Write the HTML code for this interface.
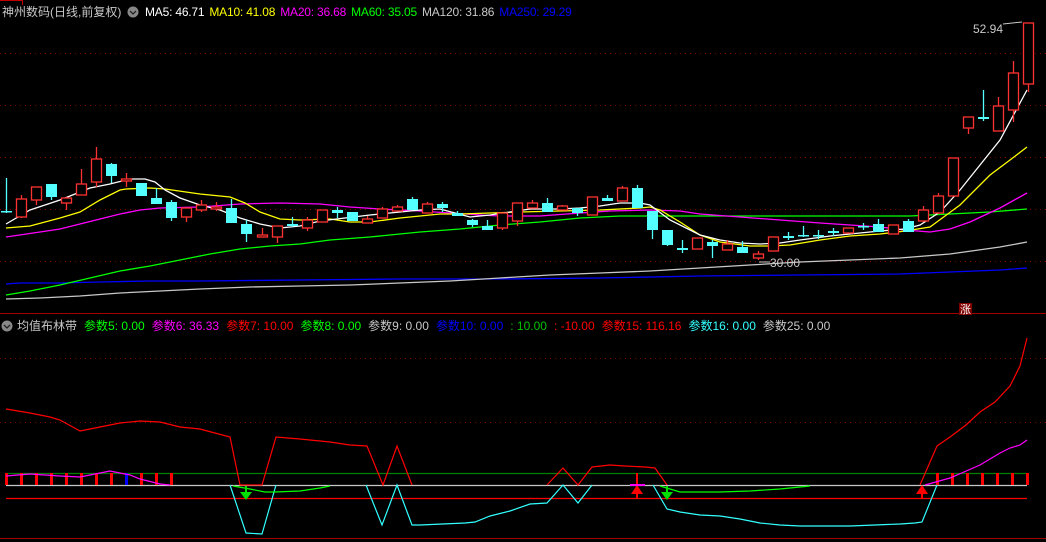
<!DOCTYPE html>
<html><head><meta charset="utf-8"><style>
body{margin:0;background:#000;width:1046px;height:542px;overflow:hidden;position:relative;font-family:"Liberation Sans","Noto Sans CJK SC",sans-serif;font-size:12px}
.h{position:absolute;white-space:nowrap;line-height:14px}
.t span{margin-right:5px;letter-spacing:-0.2px}
.l span{margin-right:7px}
</style></head><body>
<svg width="1046" height="542" style="position:absolute;left:0;top:0" id="s">
<g stroke="#800000" stroke-dasharray="1,4" stroke-width="1">
<line x1="0" y1="53.5" x2="1046" y2="53.5"/><line x1="0" y1="105.5" x2="1046" y2="105.5"/><line x1="0" y1="157.5" x2="1046" y2="157.5"/><line x1="0" y1="209.5" x2="1046" y2="209.5"/><line x1="0" y1="261.5" x2="1046" y2="261.5"/>
<line x1="0" y1="358.5" x2="1046" y2="358.5"/><line x1="0" y1="422.5" x2="1046" y2="422.5"/>
</g>
<line x1="0" y1="313.5" x2="1046" y2="313.5" stroke="#a00000"/>
<line x1="0" y1="538.5" x2="1046" y2="538.5" stroke="#a00000"/>
<line x1="0" y1="0.5" x2="22" y2="0.5" stroke="#c00000"/><line x1="22.5" y1="0" x2="22.5" y2="5" stroke="#c00000"/>
<g fill="none" stroke-width="1.3">
<polyline stroke="#0000ff" points="6,284 20,283 60,283 100,282 150,281 200,281 300,280 400,279 500,279 600,278 700,276 800,275 900,274 950,272 1000,270 1027,268"/>
<polyline stroke="#c8c8c8" points="6,299 40,298 80,296 120,293 160,291 200,289 250,287 300,286 350,285 400,283 450,281 500,278 550,275 600,273 650,271 700,268 750,265 800,262 850,260 900,258 950,254 1000,247 1027,242"/>
<polyline stroke="#00ff00" points="6,295 30,291 60,285 90,278 120,271 150,266 180,260 210,254 240,249 270,246 300,244 330,240 370,237 420,232 460,229 500,225 540,222 580,218 620,216 650,216 700,216 750,216 850,216 910,216 950,214 990,212 1027,209"/>
<polyline stroke="#ff00ff" points="6,237 40,232 60,229 80,224 100,219 120,214 140,210 160,208 200,207 240,204 280,203 320,204 350,207 380,209 420,211 450,213 480,215 500,216 540,216 580,213 610,211 650,210 680,211 700,214 740,217 780,220 820,223 850,225 880,227 905,230 930,232 950,229 970,222 1000,208 1027,193"/>
<polyline stroke="#ffff00" points="6,228 30,226 60,218 80,212 100,200 120,190 126,189 150,188 165,189 200,194 230,197 245,203 260,212 280,219 300,220 330,219 350,222 370,222 400,218 420,216 440,214 460,214 490,213 520,212 560,211 600,210 640,208 650,207 660,210 680,222 700,235 720,242 750,246 770,246 790,245 820,240 850,236 880,234 905,231 930,227 960,205 990,175 1010,160 1027,147"/>
<polyline stroke="#ffffff" points="6,224 30,210 60,200 90,188 110,184 130,179 145,179 155,182 165,190 180,198 200,205 220,210 240,218 260,224 280,228 300,226 320,221 345,218 370,215 400,212 420,210 440,209 455,213 470,217 490,215 510,212 530,209 560,209 580,208 600,206 620,203 640,203 650,205 670,220 700,235 720,240 740,243 760,244 780,243 800,240 830,236 860,233 880,231 905,229 920,225 940,212 960,190 980,165 1000,140 1027,90"/>
</g>
<g id="c"></g>
<text x="973" y="33" fill="#c8c8c8" font-size="12" font-family="Liberation Sans">52.94</text>
<line x1="1003" y1="24" x2="1022" y2="22" stroke="#c8c8c8"/>
<text x="770" y="267" fill="#c8c8c8" font-size="12" font-family="Liberation Sans">30.00</text>
<line x1="759" y1="262" x2="770" y2="262" stroke="#c8c8c8"/>
<rect x="959" y="303" width="13" height="12" fill="#800000"/>
<text x="960" y="313" fill="#fff" font-size="11" font-family="Noto Sans CJK SC">涨</text>
<line x1="6" y1="473.5" x2="1027" y2="473.5" stroke="#008000" stroke-width="1.3"/>
<line x1="6" y1="485.5" x2="1027" y2="485.5" stroke="#c8c8c8" stroke-width="1.3"/>
<line x1="6" y1="498.5" x2="1027" y2="498.5" stroke="#ff0000" stroke-width="1.3"/>
<g id="bars"></g>
<g fill="none" stroke-width="1.2">
<polyline stroke="#ff0000" points="6,409 30,413 50,417 60,420 80,431 90,429 100,427 120,423 140,421 160,422 180,427 200,429 230,437 240,485 262,485 276,437 300,439 330,442 350,445 367,446 383,485 397,446 412,485"/>
<polyline stroke="#ff0000" points="547,485 563,468 578,485 592,467 610,465 625,466 645,467 655,468 667,485"/>
<polyline stroke="#ff0000" points="920,485 937,446 950,437 966,425 980,412 995,402 1010,386 1020,366 1027,338"/>
<polyline stroke="#33ffff" points="230,485 246,533 262,534 276,485"/>
<polyline stroke="#33ffff" points="366,485 382,525 397,485 412,525 420,525 465,523 475,522 490,516 510,511 530,504 547,503 563,485 578,503 592,485"/>
<polyline stroke="#33ffff" points="653,485 667,509 680,512 700,515 720,516 740,519 760,523 780,525 800,526 850,526 900,524 915,523 922,522 937,485"/>
<polyline stroke="#00ff00" points="233,486 250,489 265,492 275,492 300,491 320,488 330,486"/>
<polyline stroke="#00ff00" points="660,486 680,492 720,492 750,491 780,489 810,486"/>
<polyline stroke="#ff00ff" points="6,476 30,474 60,476 80,477 95,474 110,471 115,472 130,475 140,479 160,484 170,485"/>
<polyline stroke="#ff00ff" points="925,485 950,478 980,465 1000,453 1010,448 1020,445 1027,440"/>
</g>
<g stroke-width="2">
<line x1="246" y1="486" x2="246" y2="494" stroke="#00e000"/><polygon points="240,492 252,492 246,500" fill="#00e000"/>
<line x1="667" y1="486" x2="667" y2="494" stroke="#00e000"/><polygon points="661,492 673,492 667,500" fill="#00e000"/>
<line x1="637" y1="473" x2="637" y2="498" stroke="#ff0000"/><polygon points="631,494 643,494 637,485" fill="#ff0000"/>
<line x1="922" y1="488" x2="922" y2="498" stroke="#ff0000"/><polygon points="916,494 928,494 922,485" fill="#ff0000"/>
<line x1="630" y1="485" x2="645" y2="485" stroke="#ff00ff"/>
</g>
<circle cx="133" cy="12" r="5.5" fill="#888"/><polyline points="130,11 133,14 136,11" fill="none" stroke="#222" stroke-width="1.3"/>
<circle cx="7" cy="326" r="5.5" fill="#888"/><polyline points="4,325 7,328 10,325" fill="none" stroke="#222" stroke-width="1.3"/>
</svg>
<div class="h" style="left:2px;top:5px;color:#c8c8c8">神州数码(日线,前复权)</div>
<div class="h t" style="left:145px;top:5px"><span style="color:#fff">MA5: 46.71</span><span style="color:#ffff00">MA10: 41.08</span><span style="color:#ff00ff">MA20: 36.68</span><span style="color:#00ff00">MA60: 35.05</span><span style="color:#c8c8c8">MA120: 31.86</span><span style="color:#0000ff">MA250: 29.29</span></div>
<div class="h l" style="left:17px;top:319px"><span style="color:#c8c8c8">均值布林带</span><span style="color:#00ff00">参数5: 0.00</span><span style="color:#ff00ff">参数6: 36.33</span><span style="color:#ff0000">参数7: 10.00</span><span style="color:#00ff00">参数8: 0.00</span><span style="color:#c8c8c8">参数9: 0.00</span><span style="color:#0000ff">参数10: 0.00</span><span style="color:#00c000">: 10.00</span><span style="color:#ff0000">: -10.00</span><span style="color:#ff0000">参数15: 116.16</span><span style="color:#33ffff">参数16: 0.00</span><span style="color:#c8c8c8">参数25: 0.00</span></div>
<script>
var C=[[0,211,212,178,213,'c'],[1,199,217,195,218,'r'],[2,187,200,187,205,'r'],[3,184,197,184,200,'c'],[4,198,203,197,210,'r'],[5,184,195,169,195,'r'],[6,159,182,147,187,'r'],[7,164,176,163,183,'c'],[8,179,181,173,187,'r'],[9,183,196,183,196,'c'],[10,198,204,188,204,'c'],[11,202,218,200,221,'c'],[12,208,217,208,222,'r'],[13,205,210,200,212,'r'],[14,207,209,202,211,'r'],[15,208,223,199,223,'c'],[16,224,234,220,242,'c'],[17,235,237,228,237,'r'],[18,226,237,226,243,'r'],[19,224,226,217,227,'c'],[20,220,228,217,231,'r'],[21,210,222,210,222,'r'],[22,210,213,207,218,'c'],[23,212,221,212,221,'c'],[24,219,223,216,223,'r'],[25,209,218,207,218,'r'],[26,207,211,205,211,'r'],[27,199,210,197,210,'c'],[28,204,213,202,213,'r'],[29,204,208,202,212,'c'],[30,213,216,211,216,'c'],[31,220,225,219,227,'c'],[32,226,230,220,230,'c'],[33,213,228,213,230,'r'],[34,203,221,203,226,'r'],[35,203,208,200,208,'r'],[36,203,212,198,212,'c'],[37,206,210,205,210,'r'],[38,208,213,208,216,'c'],[39,197,215,197,215,'r'],[40,198,201,195,201,'c'],[41,188,201,186,201,'r'],[42,188,208,185,208,'c'],[43,211,230,211,239,'c'],[44,230,245,230,246,'c'],[45,248,250,240,253,'c'],[46,238,249,238,249,'r'],[47,242,246,240,258,'c'],[48,244,250,240,250,'r'],[49,247,253,241,253,'c'],[50,254,258,251,260,'r'],[51,237,251,237,251,'r'],[52,236,238,232,240,'c'],[53,235,235,226,237,'c'],[54,235,235,230,239,'c'],[55,231,233,228,236,'c'],[56,228,233,228,233,'r'],[57,226,226,223,230,'c'],[58,224,232,219,232,'c'],[59,225,234,225,234,'r'],[60,221,232,219,232,'c'],[61,210,221,206,222,'r'],[62,196,213,193,214,'r'],[63,158,196,158,196,'r'],[64,117,128,117,134,'r'],[65,117,119,90,121,'c'],[66,106,131,97,131,'r'],[67,73,110,61,122,'r'],[68,23,84,23,92,'r']];
var s='';C.forEach(function(k){var x=Math.round(6+k[0]*15.03),t=Math.min(k[1],k[2]),h=Math.max(1.5,Math.abs(k[2]-k[1]));var col=k[5]=='r'?'#ff3232':'#54ffff';
s+='<line x1="'+(x+.5)+'" y1="'+k[3]+'" x2="'+(x+.5)+'" y2="'+k[4]+'" stroke="'+col+'" stroke-width="1.3"/>';
if(k[5]=='r')s+='<rect x="'+(x-4.5)+'" y="'+t+'" width="10" height="'+h+'" fill="#000" stroke="'+col+'" stroke-width="1.3"/>';
else s+='<rect x="'+(x-5)+'" y="'+t+'" width="11" height="'+h+'" fill="'+col+'"/>';});
document.getElementById('c').innerHTML=s;
var b='';[6,21,36,51,66,81,96,111,126,141,156,171,937,952,967,982,997,1012,1027].forEach(function(x){b+='<rect x="'+(x-1)+'" y="473" width="3" height="12" fill="'+(x==126?'#0000ff':'#ff0000')+'"/>';});
document.getElementById('bars').innerHTML=b;
</script>
</body></html>
